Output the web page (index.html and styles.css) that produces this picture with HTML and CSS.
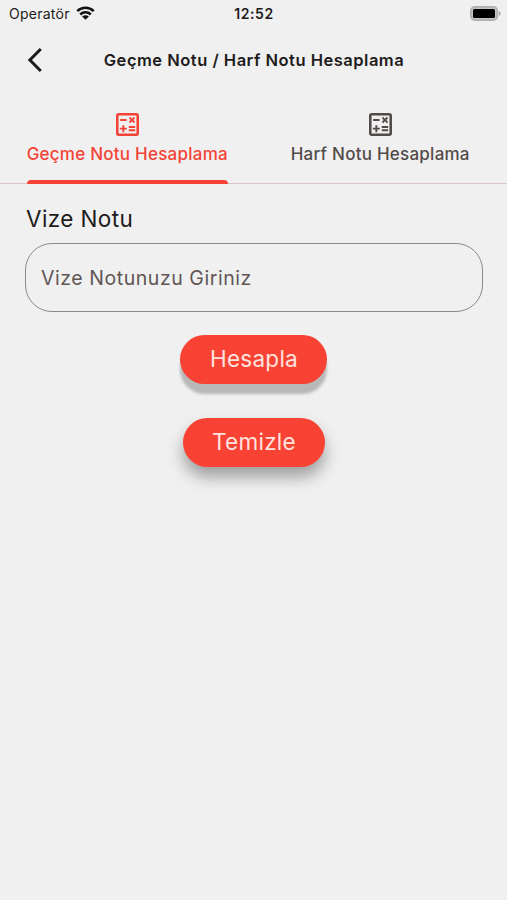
FILE: index.html
```html
<!DOCTYPE html>
<html lang="tr">
<head>
<meta charset="utf-8">
<meta name="viewport" content="width=device-width, initial-scale=1">
<title>Geçme Notu / Harf Notu Hesaplama</title>
<link rel="stylesheet" href="styles.css">
</head>
<body>
<svg width="0" height="0" class="sprite">
  <symbol id="calc" viewBox="3 3 18 18">
    <path d="M19 3H5c-1.1 0-2 .9-2 2v14c0 1.1.9 2 2 2h14c1.1 0 2-.9 2-2V5c0-1.1-.9-2-2-2zm0 16H5V5h14v14z"/>
    <path d="M6.25 7.72h5v1.5h-5zM13 15.75h5v1.5h-5zM13 13.25h5v1.5h-5zM8 18h1.5v-2h2v-1.5h-2v-2H8v2H6V16h2z"/>
    <path d="M14.09 10.95l1.41-1.41 1.41 1.41 1.06-1.06-1.41-1.42 1.41-1.41L16.91 6 15.5 7.41 14.09 6l-1.06 1.06 1.41 1.41-1.41 1.42z"/>
  </symbol>
</svg>
<div class="status">
  <div class="carrier"><span>Operatör</span>
    <svg class="wifi" viewBox="0 0 18 13"><path d="M1.2 4.7a11.2 11.2 0 0 1 15.6 0M4 7.9a7.2 7.2 0 0 1 10 0" fill="none" stroke="#111" stroke-width="2.4"/><path d="M9 13 5.8 9.9a4.6 4.6 0 0 1 6.4 0z" fill="#111"/></svg>
  </div>
  <div class="time">12:52</div>
  <svg class="battery" viewBox="0 0 31 15"><rect x=".9" y=".9" width="26.4" height="13.2" rx="4" fill="#c4c4c4" stroke="#b0b0b0" stroke-width="1.8"/><rect x="3" y="3" width="22" height="9" rx="1.5" fill="#000"/><path d="M28.8 5c1.2.4 1.9 1.3 1.9 2.5s-.7 2.1-1.9 2.5z" fill="#aaa"/></svg>
</div>
<header class="appbar">
  <svg class="back" viewBox="0 0 16 26"><path d="M13.8 2 2.9 13l10.9 11" fill="none" stroke="#1c1b1b" stroke-width="3"/></svg>
  <h1>Geçme Notu / Harf Notu Hesaplama</h1>
</header>
<nav class="tabs">
  <div class="tab active"><svg><use href="#calc"/></svg><span class="label">Geçme Notu Hesaplama</span></div>
  <div class="tab"><svg><use href="#calc"/></svg><span class="label">Harf Notu Hesaplama</span></div>
</nav>
<main>
  <label for="vize">Vize Notu</label>
  <input id="vize" type="text" placeholder="Vize Notunuzu Giriniz">
  <div class="actions">
    <button class="calc">Hesapla</button>
    <button class="clear">Temizle</button>
  </div>
</main>
</body>
</html>
```
FILE: styles.css
```css
* { box-sizing: border-box; }
body { margin: 0; min-height: 900px; background: #f0f0f0; font-family: Inter, "Liberation Sans", sans-serif; color: #1d1b1b; }
.sprite { display: block; height: 0; }
.status { display: grid; grid-template-columns: 1fr auto 1fr; align-items: center; height: 27px; padding: 0 6px 0 9px; }
.carrier { display: flex; align-items: center; gap: 6px; font-size: 14px; letter-spacing: 0.25px; }
.wifi { width: 19px; height: 14px; margin-top: -2px; }
.time { margin-left: -2px; font-size: 14px; font-weight: 600; letter-spacing: 0.6px; }
.battery { width: 31px; height: 15px; justify-self: end; }
.appbar { display: grid; grid-template-columns: 51px 1fr 51px; align-items: center; height: 66px; }
.back { width: 16px; height: 26px; margin-left: 27px; }
h1 { margin: 0; padding-left: 1px; font-size: 16.5px; font-weight: 600; text-align: center; letter-spacing: 0.5px; white-space: nowrap; }
.tabs { display: grid; grid-template-columns: 1fr 1fr; height: 91px; border-bottom: 1px solid #dac6c4; }
.tab { display: flex; flex-direction: column; align-items: center; height: 91px; padding-top: 20px; color: #534b4a; font-size: 17px; font-weight: 500; }
.tab svg { width: 23px; height: 23px; fill: currentColor; }
.label { display: flex; flex-direction: column; justify-content: space-between; height: 48px; padding-top: 8px; line-height: 20px; letter-spacing: 0.24px; white-space: nowrap; }
.tab.active { padding-left: 1px; color: #f44336; }
.active .label::after { content: ""; height: 4px; border-radius: 4px 4px 0 0; background: #f44336; }
main { padding: 20px 25px; }
label { display: block; margin-left: 1px; font-size: 22.5px; line-height: 30px; letter-spacing: 0.4px; }
input { display: block; width: 458px; height: 69px; margin-top: 9px; padding: 0 15px; border: 1.4px solid #8f8785; border-radius: 27px; background: transparent; font: 19.5px Inter, sans-serif; letter-spacing: 0.55px; }
input::placeholder { color: #5f5655; opacity: 1; }
.actions { display: flex; flex-direction: column; align-items: center; gap: 34px; margin-top: 23px; }
button { height: 49px; padding: 0 0 3px 1px; border: 0; border-radius: 25px; background: #f74234; color: #ffe3df; font: 22.5px Inter, sans-serif; letter-spacing: 0.25px; }
.calc { width: 147px; box-shadow: 0 10px 3px #b8b8b8; }
.clear { width: 142px; box-shadow: 0 10px 16px rgba(0,0,0,.34); }
```
